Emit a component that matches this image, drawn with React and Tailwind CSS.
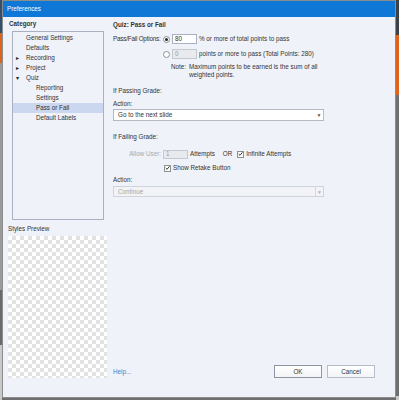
import React from 'react';

const treeItems = [
  { label: 'General Settings', indent: 'pl-[13px]' },
  { label: 'Defaults', indent: 'pl-[13px]' },
  { label: 'Recording', indent: 'pl-[13px]', arrow: '▸' },
  { label: 'Project', indent: 'pl-[13px]', arrow: '▸' },
  { label: 'Quiz', indent: 'pl-[13px]', arrow: '▾' },
  { label: 'Reporting', indent: 'pl-[23px]' },
  { label: 'Settings', indent: 'pl-[23px]' },
  { label: 'Pass or Fail', indent: 'pl-[23px]', active: true },
  { label: 'Default Labels', indent: 'pl-[23px]' },
];

function Radio({ checked }) {
  return (
    <span className="w-[7px] h-[7px] rounded-full border border-[#8e8f8f] bg-white flex items-center justify-center shrink-0">
      {checked && <span className="w-[3px] h-[3px] rounded-full bg-[#222]"></span>}
    </span>
  );
}

function Check() {
  return (
    <span className="w-[7px] h-[7px] border border-[#8e8f8f] bg-white flex items-center justify-center shrink-0">
      <svg width="6" height="6" viewBox="0 0 6 6">
        <path d="M0.8 3 L2.4 4.6 L5.3 1" fill="none" stroke="#222" strokeWidth="1.1" />
      </svg>
    </span>
  );
}

function Select({ text, disabled }) {
  return (
    <div className={`h-full flex items-center border ${disabled ? 'border-[#cfd3da] bg-[#f1f3f6] text-[#a8a8a8]' : 'border-[#b4b9c4] bg-white text-[#333]'}`}>
      <span className="flex-1 pl-[4px]">{text}</span>
      <span className={`w-[8px] h-full flex items-center justify-center text-[5px] ${disabled ? 'border-l border-[#d8dbe0] text-[#b0b0b0]' : 'text-[#555]'}`}>▼</span>
    </div>
  );
}

function Button({ children, strong }) {
  return (
    <div className={`w-[48px] h-[13px] flex items-center justify-center bg-gradient-to-b from-white to-[#f3f4f6] border ${strong ? 'border-[#8f95a0]' : 'border-[#b7bcc6]'}`}>
      {children}
    </div>
  );
}

export default function App() {
  return (
    <div className="w-[399px] h-[400px] flex overflow-hidden bg-[#6f6f6f] font-['Liberation_Sans',sans-serif] text-[6.3px] leading-[8px] text-[#333] whitespace-nowrap">
      <div className="w-[2px] flex flex-col shrink-0">
        <div className="h-[33px] bg-[#33506e]"></div>
        <div className="h-[30px] bg-[#e0631c]"></div>
        <div className="h-[227px] bg-[#9a9a9a]"></div>
        <div className="h-[55px] bg-[#6a6a6a]"></div>
        <div className="flex-1 bg-[#c9c9c9]"></div>
      </div>

      <div className="w-[394px] h-[398px] shrink-0 border border-[#8c8c8c] bg-[#eff2f8] flex flex-col">
        <div className="h-[16px] bg-[#0f78d7] text-white flex items-center pl-[4px] shrink-0">Preferences</div>
        <div className="flex flex-1">
          <div className="w-[110px] shrink-0 pl-[5px] flex flex-col">
            <div className="mt-[3px] ml-[1px] font-bold">Category</div>
            <div className="mt-[3px] ml-[4px] w-[92px] h-[189px] border border-[#a9b0bf] pt-[1px]">
              {treeItems.map((it) => (
                <div key={it.label} className={`relative h-[10px] flex items-center ${it.indent} ${it.active ? 'bg-[#cad7ee]' : ''}`}>
                  {it.arrow && <span className="absolute left-[3px] text-[6px] text-[#222]">{it.arrow}</span>}
                  {it.label}
                </div>
              ))}
            </div>
            <div className="mt-[5px]">Styles Preview</div>
            <div className="mt-[3px] w-[99px] h-[142px] bg-[conic-gradient(#e2e2e2_25%,#ffffff_0_50%,#e2e2e2_0_75%,#ffffff_0)] bg-[length:8px_8px]"></div>
          </div>

          <div className="flex-1 flex flex-col">
            <div className="mt-[4px] font-bold">Quiz: Pass or Fail</div>

            <div className="mt-[5px] h-[10px] flex items-center">
              <span className="w-[50px] shrink-0 tracking-[-0.2px]">Pass/Fail Options:</span>
              <Radio checked />
              <span className="ml-[2px] w-[25px] h-[10px] border border-[#a9b0bf] bg-white flex items-center pl-[2px]">80</span>
              <span className="ml-[2px]">% or more of total points to pass</span>
            </div>

            <div className="mt-[5px] h-[10px] flex items-center pl-[50px]">
              <Radio />
              <span className="ml-[2px] w-[25px] h-[10px] border border-[#c4c8d0] bg-[#e8eaee] text-[#9a9a9a] flex items-center pl-[2px]">0</span>
              <span className="ml-[2px]">points or more to pass (Total Points: 280)</span>
            </div>

            <div className="mt-[4px] flex pl-[58px]">
              <span className="w-[18px]">Note:</span>
              <span>Maximum points to be earned is the sum of all<br />weighted points.</span>
            </div>

            <div className="mt-[8px]">If Passing Grade:</div>
            <div className="mt-[5px]">Action:</div>
            <div className="mt-[1px] h-[12px] w-[211px]">
              <Select text="Go to the next slide" />
            </div>

            <div className="mt-[12px]">If Failing Grade:</div>
            <div className="mt-[8px] h-[10px] flex items-center">
              <span className="w-[50px] shrink-0 text-right pr-[2px] text-[#a8a8a8]">Allow User:</span>
              <span className="w-[25px] h-[9px] border border-[#c4c8d0] bg-[#e8eaee] text-[#9a9a9a] flex items-center pl-[2px]">1</span>
              <span className="ml-[2px]">Attempts</span>
              <span className="ml-[8px]">OR</span>
              <span className="ml-[5px]"><Check /></span>
              <span className="ml-[2px]">Infinite Attempts</span>
            </div>
            <div className="mt-[4px] h-[10px] flex items-center pl-[51px]">
              <Check />
              <span className="ml-[2px]">Show Retake Button</span>
            </div>
            <div className="mt-[3px]">Action:</div>
            <div className="mt-[2px] h-[11px] w-[211px]">
              <Select text="Continue" disabled />
            </div>

            <div className="flex-1"></div>
            <div className="mb-[19px] h-[13px] flex items-center pr-[20px]">
              <span className="text-[#3b7fd0]">Help...</span>
              <div className="flex-1"></div>
              <Button strong>OK</Button>
              <div className="w-[5px]"></div>
              <Button>Cancel</Button>
            </div>
          </div>
        </div>
      </div>

      <div className="flex-1 flex flex-col">
        <div className="h-[35px] bg-[#3d4247]"></div>
        <div className="h-[60px] bg-[#e0631c]"></div>
        <div className="flex-1 bg-[#707070]"></div>
        <div className="h-[4px] bg-[#c9c9c9]"></div>
      </div>
    </div>
  );
}
